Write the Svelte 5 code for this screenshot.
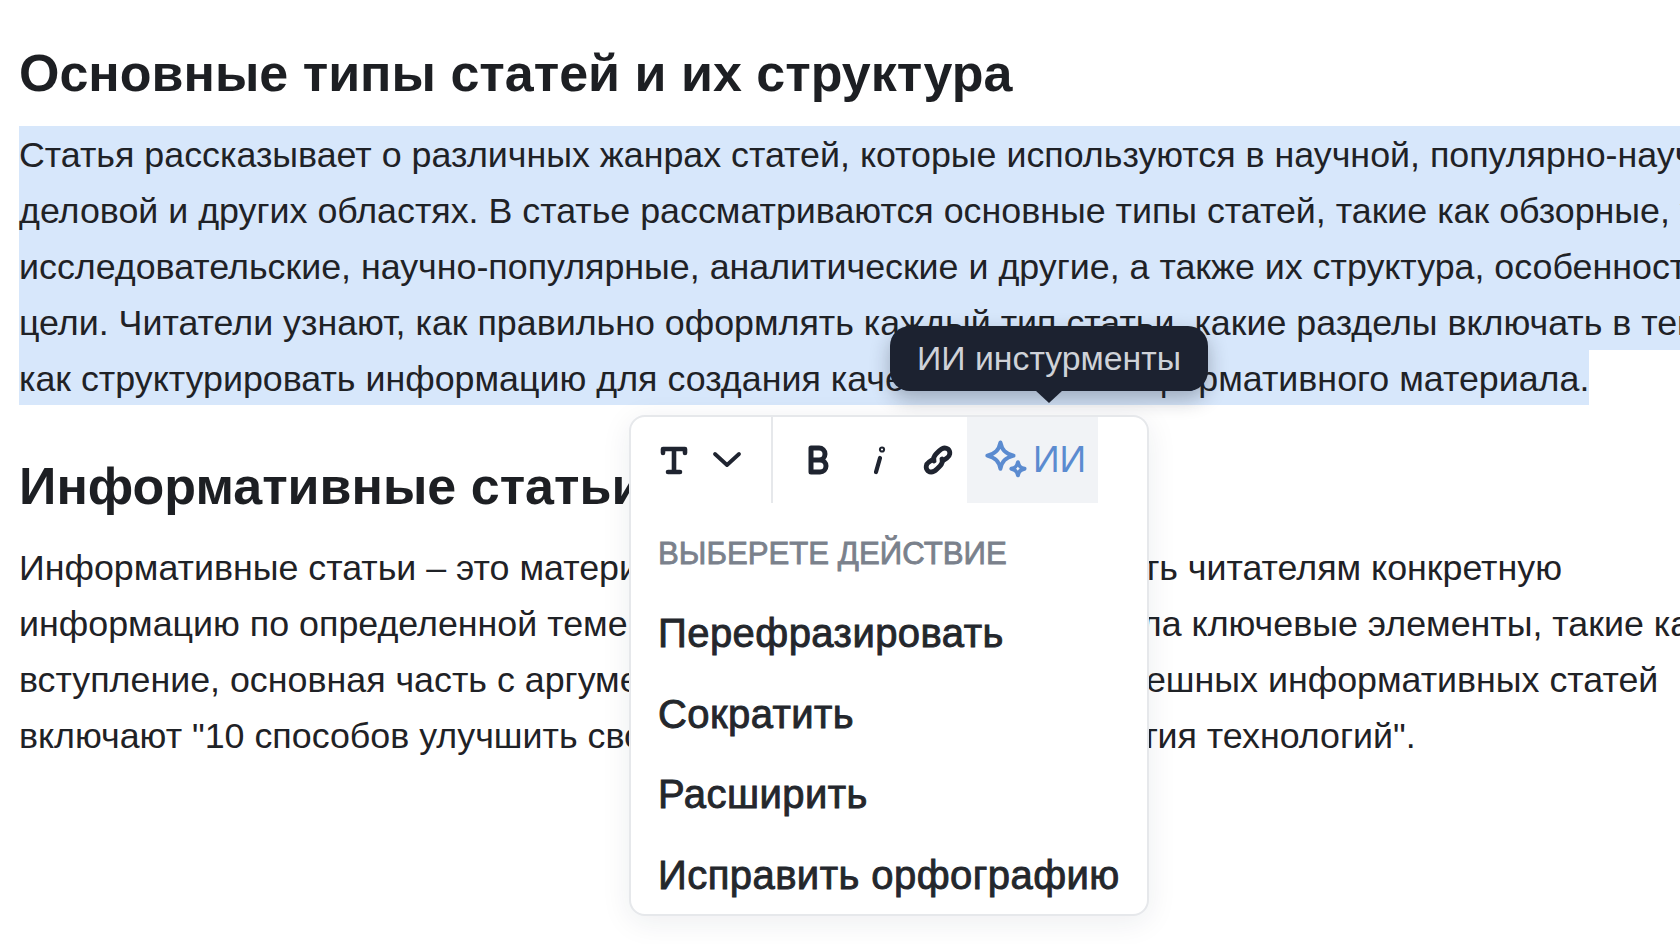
<script>
  const sel = [
    'Статья рассказывает о различных жанрах статей, которые используются в научной, популярно-научной,',
    'деловой и других областях. В статье рассматриваются основные типы статей, такие как обзорные, учебные,',
    'исследовательские, научно-популярные, аналитические и другие, а также их структура, особенности и',
    'цели. Читатели узнают, как правильно оформлять каждый тип статьи, какие разделы включать в тексте и',
    'как структурировать информацию для создания качественного и информативного материала.'
  ];
  const body = [
    'Информативные статьи – это материалы, суть которых предоставить читателям конкретную',
    'информацию по определенной теме. Верно, чтобы статья содержала ключевые элементы, такие как',
    'вступление, основная часть с аргументами, концовка. Образцы успешных информативных статей',
    'включают "10 способов улучшить свою кожу" и "Моя история развития технологий".'
  ];
  const items = ['Перефразировать', 'Сократить', 'Расширить', 'Исправить орфографию'];
</script>

<main class="page">
  <h2 class="first">Основные типы статей и их структура</h2>
  <div class="block">
    {#each sel as l, i}
      <div class="line selected" class:fit={i === sel.length - 1}>{l}</div>
    {/each}
  </div>
  <h2 class="second">Информативные статьи</h2>
  <div class="block">
    {#each body as l}
      <div class="line">{l}</div>
    {/each}
  </div>

  <div class="tooltip">ИИ инстурменты</div>

  <section class="pop">
    <div class="toolbar">
      <div class="group left">
        <svg width="28" height="32" viewBox="0 0 28 32" fill="none" stroke="#1f2430" stroke-width="4.6" stroke-linecap="round" stroke-linejoin="round">
          <path d="M3 9V5h22v4M14 5v23M8 28h12"/>
        </svg>
        <svg class="chev" width="30" height="18" viewBox="0 0 30 18" fill="none" stroke="#1f2430" stroke-width="3.8" stroke-linecap="round" stroke-linejoin="round">
          <path d="M3 3l12 11L27 3"/>
        </svg>
      </div>
      <div class="group mid">
        <svg width="24" height="32" viewBox="0 0 24 32" fill="none" stroke="#1f2430" stroke-width="5" stroke-linejoin="round" stroke-linecap="round">
          <path d="M4 4h8a5.500 5.500 0 0 1 0 12H4zM4 16h9a5.500 5.500 0 0 1 0 12H4z"/>
        </svg>
        <svg class="ital" width="16" height="32" viewBox="0 0 16 32" fill="none" stroke="#1f2430" stroke-width="4.200" stroke-linecap="round">
          <path d="M9 14L5 28"/><circle cx="11" cy="5.500" r="1"/>
        </svg>
        <svg class="link" width="32" height="34" viewBox="0 0 32 32" fill="none" stroke="#1f2430" stroke-width="4.800" stroke-linecap="round">
          <path d="M12 17c-1-3 0-5 2-7l3-3c3-3 6-4 9-2 3 3 2 7-1 9l-3 2"/>
          <path d="M20 15c1 3 0 5-2 7l-3 3c-3 3-6 4-9 2-3-3-2-7 1-9l3-2"/>
        </svg>
      </div>
      <div class="ai">
        <svg width="46" height="42" viewBox="0 0 42 38" fill="none" stroke="#5b8bd0" stroke-width="3.600" stroke-linejoin="round">
          <path d="M15 3c1.500 7 4.500 10 12 12-7.500 2-10.500 5-12 12-1.500-7-4.500-10-12-12 7.500-2 10.500-5 12-12z"/>
          <path d="M31 21c.7 3.500 2 5 6 6-4 1-5.300 2.500-6 6-.7-3.500-2-5-6-6 4-1 5.300-2.500 6-6z"/>
        </svg>
        <span>ИИ</span>
      </div>
    </div>
    <div class="label">ВЫБЕРЕТЕ ДЕЙСТВИЕ</div>
    <ul class="menu">
      {#each items as it}
        <li>{it}</li>
      {/each}
    </ul>
  </section>
</main>

<style>
  :global(body) {
    margin: 0;
    background: #fff;
    overflow: hidden;
    height: 944px;
  }
  .page {
    position: relative;
    width: 1680px;
    height: 944px;
    overflow: hidden;
    padding: 39px 0 0 19px;
    box-sizing: border-box;
    font-family: "Liberation Sans", Arial, sans-serif;
    color: #1f2226;
  }
  h2 {
    margin: 0;
    font-size: 52px;
    line-height: 68px;
    font-weight: 700;
    color: #1d1f23;
    white-space: nowrap;
  }
  .first { margin-bottom: 19px; }
  .second { margin-top: 47px; margin-bottom: 19px; }
  .line {
    font-size: 35.800px;
    line-height: 58.500px;
    height: 55.900px;
    white-space: nowrap;
    width: 1700px;
  }
  .selected { background: #d7e7fb; }
  .fit { width: fit-content; }

  .tooltip {
    position: absolute;
    left: 890px;
    top: 326px;
    width: 318px;
    height: 65px;
    border-radius: 20px;
    background: #1c2230;
    color: #cfd2d8;
    font-size: 33.800px;
    line-height: 64px;
    text-align: center;
    box-shadow: 0 8px 20px rgba(20, 25, 40, 0.3);
  }
  .tooltip::after {
    content: "";
    position: absolute;
    left: 50%;
    bottom: -12px;
    margin-left: -14px;
    border-left: 14px solid transparent;
    border-right: 14px solid transparent;
    border-top: 13px solid #1c2230;
  }

  .pop {
    position: absolute;
    left: 629px;
    top: 415px;
    width: 520px;
    height: 501px;
    box-sizing: border-box;
    background: #fff;
    border: 2px solid #e6e8eb;
    border-radius: 16px;
    box-shadow: 0 6px 30px rgba(30, 40, 60, 0.08);
    overflow: hidden;
  }
  .toolbar {
    display: flex;
    align-items: stretch;
    height: 86px;
  }
  .group {
    display: flex;
    align-items: center;
  }
  .left {
    width: 142px;
    padding-left: 29px;
    box-sizing: border-box;
    border-right: 2px solid #e6e8eb;
    gap: 24px;
  }
  .mid {
    width: 194px;
    padding-left: 34px;
    box-sizing: border-box;
  }
  .ital { margin-left: 40px; }
  .link { margin-left: 35px; }
  .ai {
    display: flex;
    align-items: center;
    width: 131px;
    background: #f1f3f6;
    padding-left: 17px;
    box-sizing: border-box;
    color: #5b8bd0;
    font-size: 37px;
  }
  .ai span { margin-left: 3px; }
  .label {
    margin: 31px 0 0 27px;
    font-weight: 400;
    font-size: 31.200px;
    line-height: 40px;
    color: #7a818c;
    white-space: nowrap;
    -webkit-text-stroke: 0.8px #7a818c;
  }
  .menu {
    list-style: none;
    margin: 19px 0 0;
    padding: 0 0 0 27px;
  }
  .menu li {
    font-weight: 400;
    font-size: 40px;
    line-height: 80.500px;
    letter-spacing: 0.45px;
    color: #24272c;
    white-space: nowrap;
    -webkit-text-stroke: 0.9px #24272c;
  }
</style>
